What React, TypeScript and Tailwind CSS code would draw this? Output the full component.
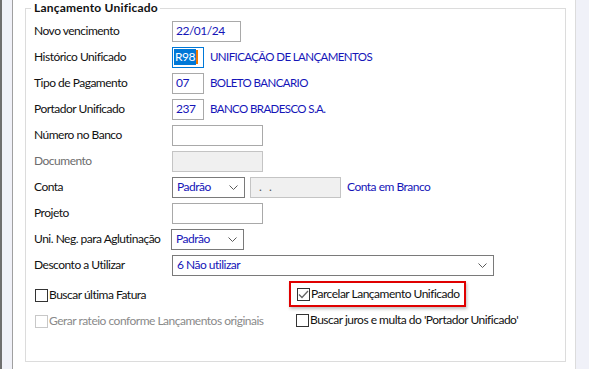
import React from "react";

const font = { fontFamily: 'Lato, "Liberation Sans", sans-serif' };

const Chevron = () => (
  <svg width="9" height="5" viewBox="0 0 9 5" className="shrink-0">
    <path d="M0.5 0.5 L4.5 4.5 L8.5 0.5" fill="none" stroke="#5a5a5a" strokeWidth="1" />
  </svg>
);

const Row = ({ label, muted, children }: { label: string; muted?: boolean; children?: React.ReactNode }) => (
  <div className="flex h-[26px] items-center whitespace-nowrap">
    <div className={`w-[138px] shrink-0 ${muted ? "text-[#6d6d6d]" : "text-[#111]"}`}>{label}</div>
    <div className="flex items-center">{children}</div>
  </div>
);

const Box = ({ w, disabled, children }: { w: string; disabled?: boolean; children?: React.ReactNode }) => (
  <div
    className={`${w} flex h-[21px] items-center border px-[3px] text-[#1515b8] ${
      disabled ? "border-[#c4c4c4] bg-[#f0f0f0]" : "border-[#a9a9a9] bg-white"
    }`}
  >
    {children}
  </div>
);

const Select = ({ w, value }: { w: string; value: string }) => (
  <div className={`${w} flex h-[21px] items-center justify-between border border-[#7a7a7a] bg-white pl-[4px] pr-[6px] text-[#1515b8]`}>
    <span>{value}</span>
    <Chevron />
  </div>
);

// upper-case lookup descriptions next to code fields
const Desc = ({ children }: { children: React.ReactNode }) => (
  <span className="ml-[6px] text-[11.5px] tracking-[-0.6px] text-[#1515b8]">{children}</span>
);

const Check = ({ checked, disabled }: { checked?: boolean; disabled?: boolean }) => (
  <span
    className={`flex h-[13px] w-[13px] shrink-0 items-center justify-center border bg-white ${
      disabled ? "border-[#c8c8c8]" : "border-[#333]"
    }`}
  >
    {checked && (
      <svg width="11" height="9" viewBox="0 0 11 9">
        <path d="M1 4.5 L4 7.5 L10 1" fill="none" stroke="#666" strokeWidth="1.3" />
      </svg>
    )}
  </span>
);

export default function App() {
  return (
    <div className="flex h-[369px] w-[589px] bg-white text-[12px] leading-[16px] tracking-[-0.5px]" style={font}>
      {/* left side panel */}
      <div className="w-[2px] shrink-0 bg-[#6f6f6f]" />
      <div className="w-[10px] shrink-0 bg-[#f0f1f8]" />
      <div className="w-[1px] shrink-0 bg-[#a0a0a0]" />

      {/* main area */}
      <div className="flex-1 pl-[12px] pr-[9px]">
        <fieldset className="h-[362px] border border-[#dcdcdc] px-[8px]">
          <legend className="-ml-[3px] bg-white pl-[3px] pr-[2px] font-bold tracking-[0.2px] text-[#111]">
            Lançamento Unificado
          </legend>

          <div className="pt-[2px]">
            <Row label="Novo vencimento">
              <Box w="w-[69px]">22/01/24</Box>
            </Row>
            <Row label="Histórico Unificado">
              <div className="flex h-[21px] w-[32px] items-center border border-[#0078d7] bg-white pl-[1px]">
                <span className="bg-[#0078d7] px-[1px] text-white">R98</span>
                <span className="h-[14px] w-[2px] bg-[#f07800]" />
              </div>
              <Desc>UNIFICAÇÃO DE LANÇAMENTOS</Desc>
            </Row>
            <Row label="Tipo de Pagamento">
              <Box w="w-[32px]">07</Box>
              <Desc>BOLETO BANCARIO</Desc>
            </Row>
            <Row label="Portador Unificado">
              <Box w="w-[32px]">237</Box>
              <Desc>BANCO BRADESCO S.A.</Desc>
            </Row>
            <Row label="Número no Banco">
              <Box w="w-[91px]" />
            </Row>
            <Row label="Documento" muted>
              <Box w="w-[91px]" disabled />
            </Row>
            <Row label="Conta">
              <Select w="w-[73px]" value="Padrão" />
              <div className="ml-[5px] flex h-[21px] w-[91px] items-center border border-[#c4c4c4] bg-[#f0f0f0] pl-[8px] tracking-[2px] text-[#555]">
                . .
              </div>
              <span className="ml-[6px] text-[#1515b8]">Conta em Branco</span>
            </Row>
            <Row label="Projeto">
              <Box w="w-[91px]" />
            </Row>
            <Row label="Uni. Neg. para Aglutinação">
              <div className="-ml-[1px]">
                <Select w="w-[73px]" value="Padrão" />
              </div>
            </Row>
            <Row label="Desconto a Utilizar">
              <Select w="w-[322px]" value="6 Não utilizar" />
            </Row>

            <div className="mt-[4px] flex whitespace-nowrap">
              <div className="flex w-[255px] flex-col pl-[1px]">
                <label className="flex h-[26px] items-center text-[#111]">
                  <Check />
                  <span className="ml-[1px]">Buscar última Fatura</span>
                </label>
                <label className="flex h-[26px] items-center text-[#8a8a8a]">
                  <Check disabled />
                  <span className="ml-[1px]">Gerar rateio conforme Lançamentos originais</span>
                </label>
              </div>
              <div className="-mt-[1px] flex flex-col">
                <label className="flex h-[26px] w-[177px] items-center border-2 border-[#e00000] pl-[6px] text-[#111] shadow-[1px_2px_3px_rgba(0,0,0,0.25)]">
                  <Check checked />
                  <span className="ml-[1px]">Parcelar Lançamento Unificado</span>
                </label>
                <label className="flex h-[26px] items-center pl-[7px] text-[#111]">
                  <Check />
                  <span className="ml-[1px]">Buscar juros e multa do 'Portador Unificado'</span>
                </label>
              </div>
            </div>
          </div>
        </fieldset>
      </div>

      {/* right side panel */}
      <div className="w-[1px] shrink-0 bg-[#dcdcdc]" />
      <div className="w-[13px] shrink-0 bg-[#f0f1f8]" />
    </div>
  );
}
